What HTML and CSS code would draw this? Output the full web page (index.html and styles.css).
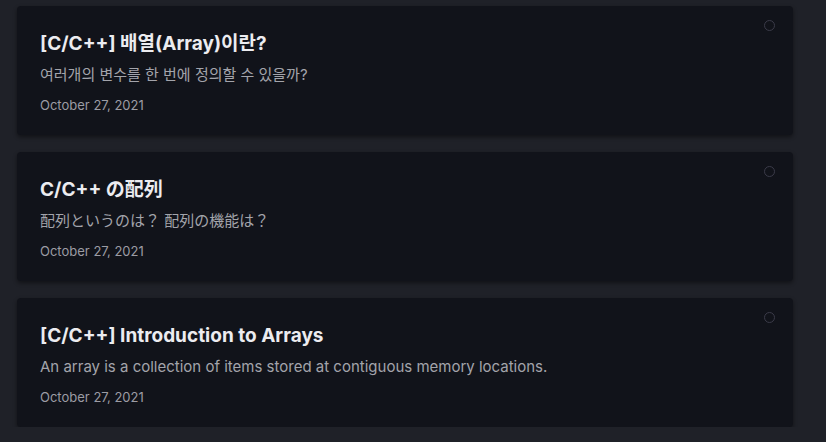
FILE: index.html
```html
<!DOCTYPE html>
<html lang="ko">
<head>
<meta charset="utf-8">
<link rel="stylesheet" href="styles.css">
</head>
<body>
<main class="list">
  <article class="card">
    <span class="dot"></span>
    <h2 class="title" lang="ko">[C/C++] 배열(Array)이란?</h2>
    <p class="desc" lang="ko">여러개의 변수를 한 번에 정의할 수 있을까?</p>
    <p class="date">October 27, 2021</p>
  </article>
  <article class="card">
    <span class="dot"></span>
    <h2 class="title" lang="ja">C/C++ の配列</h2>
    <p class="desc" lang="ja">配列というのは？ 配列の機能は？</p>
    <p class="date">October 27, 2021</p>
  </article>
  <article class="card">
    <span class="dot"></span>
    <h2 class="title">[C/C++] Introduction to Arrays</h2>
    <p class="desc">An array is a collection of items stored at contiguous memory locations.</p>
    <p class="date">October 27, 2021</p>
  </article>
</main>
</body>
</html>
```
FILE: styles.css
```css
html, body {
  margin: 0;
  background: #1f2128;
}
body {
  font-family: Inter, "Noto Sans CJK KR", "Noto Sans CJK JP", sans-serif;
  color: #e6e6ea;
}
.list {
  display: flex;
  flex-direction: column;
  gap: 17px;
  padding: 6px 33px 0 17px;
}
.card {
  position: relative;
  height: 129px;
  box-sizing: border-box;
  background: #11131a;
  border-radius: 4px;
  padding: 25px 23px 0;
  box-shadow: 0 2px 4px rgba(0,0,0,0.45);
}
.dot {
  position: absolute;
  top: 14px;
  right: 18px;
  width: 11px;
  height: 11px;
  box-sizing: border-box;
  border: 1.5px solid #3b3b49;
  border-radius: 50%;
}
.title {
  margin: 0;
  font-size: 19px;
  line-height: 26px;
  font-weight: 700;
  color: #ececf0;
}
.desc {
  margin: 8px 0 0;
  font-size: 15px;
  line-height: 20px;
  color: #a3a4ab;
}
.date {
  margin: 12px 0 0;
  font-size: 13px;
  line-height: 16px;
  color: #9c9ca4;
}
```
